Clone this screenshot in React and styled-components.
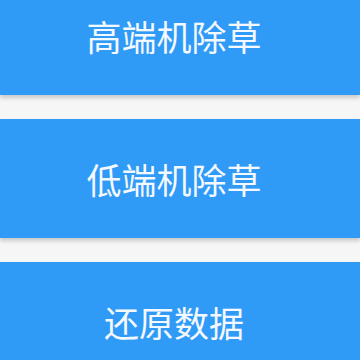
import styled, { createGlobalStyle } from "styled-components"

const GlobalStyle = createGlobalStyle`
    html, body {
        margin: 0;
        padding: 0;
        background: #f6f6f6;
        overflow: hidden;
    }
    body {
        font-family: "Noto Sans CJK SC", "Noto Sans", sans-serif;
    }
`

const StyleList = styled.div`
    display: flex;
    flex-direction: column;
    gap: 24px;
    margin-top: -24px;
    width: 360px;
`

const StyleButton = styled.button`
    display: flex;
    flex-shrink: 0;
    align-items: center;
    justify-content: center;
    height: 119px;
    width: 100%;
    padding: 0 12px 0 0;
    border: none;
    background-color: #2f9bf6;
    color: #f4f8ff;
    font-family: "Noto Sans CJK SC", sans-serif;
    font-size: 35px;
    font-weight: 400;
    box-shadow: 0px 3px 4px rgba(0, 0, 0, 0.18);
    cursor: pointer;
`

const actions = ["高端机除草", "低端机除草", "还原数据"]

export default function App() {
    return (
        <>
            <GlobalStyle />
            <StyleList>
                {actions.map((label) => (
                    <StyleButton key={label} type="button">{label}</StyleButton>
                ))}
            </StyleList>
        </>
    )
}
